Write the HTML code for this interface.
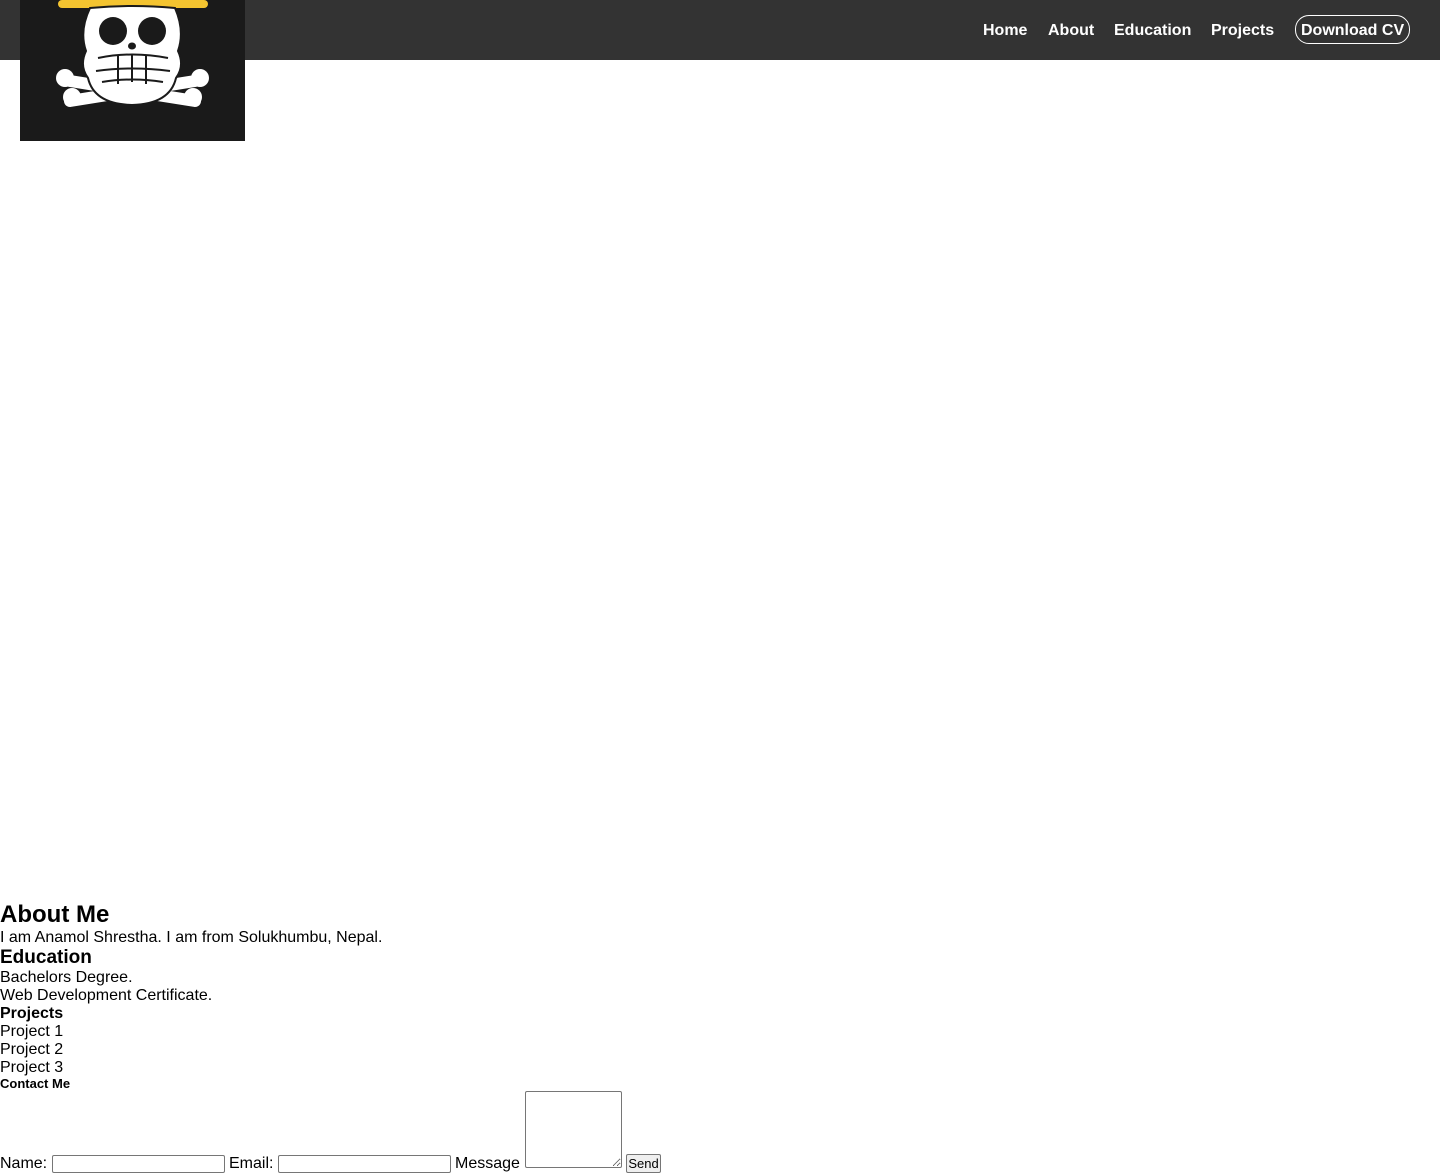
<!DOCTYPE html>
<html><head><meta charset="utf-8"><style>
*{box-sizing:border-box}
body{margin:0;width:1440px;height:1173px;position:relative;font-family:"Liberation Sans",sans-serif;background:#fff;color:#000;overflow:hidden}
.nav{position:absolute;left:0;top:0;width:1440px;height:60px;background:#333}
.nav a{position:absolute;top:21px;color:#fff;font-weight:bold;font-size:16px;text-decoration:none;line-height:20px}
.cv{border:1px solid #fff;border-radius:14px;padding:5px 5px 0;top:15px!important;height:29px}
.logo{position:absolute;left:20px;top:-84px;width:225px;height:225px;background:#1a1a1a}
.t{position:absolute;left:0;font-size:16px;line-height:18px;white-space:nowrap}
input,textarea,button{font-family:"Liberation Sans",sans-serif}
</style></head><body>
<div class="nav">
<a style="left:983px">Home</a>
<a style="left:1048px">About</a>
<a style="left:1114px">Education</a>
<a style="left:1211px">Projects</a>
<a class="cv" style="left:1295px">Download CV</a>
</div>
<div class="logo">
<svg width="225" height="225" viewBox="0 0 225 225">
<rect x="62" y="40" width="100" height="45" fill="#e01818"/>
<rect x="38" y="84" width="150" height="8" rx="4" fill="#f4c430"/>
<g stroke="#fff" stroke-width="12" stroke-linecap="round">
<path d="M50 165 L175 185"/><path d="M175 165 L50 185"/>
</g>
<g fill="#fff">
<circle cx="45" cy="162" r="9"/><circle cx="52" cy="181" r="9"/>
<circle cx="180" cy="162" r="9"/><circle cx="173" cy="181" r="9"/>
</g>
<g stroke="#1a1a1a" stroke-width="2" fill="#fff">
<path d="M70 92 Q112 88 155 92 Q165 115 158 135 Q165 150 156 162 Q150 188 112 189 Q74 188 68 162 Q59 150 66 135 Q59 115 70 92Z"/>
</g>
<ellipse cx="93" cy="115" rx="14" ry="14" fill="#1a1a1a"/>
<ellipse cx="132" cy="115" rx="14" ry="14" fill="#1a1a1a"/>
<ellipse cx="112" cy="130" rx="4" ry="3.5" fill="#1a1a1a"/>
<g stroke="#1a1a1a" stroke-width="2" fill="none">
<path d="M78 142 Q112 135 148 142"/><path d="M76 155 Q112 150 150 155"/><path d="M82 166 Q112 161 143 166"/>
<path d="M98 140 V168 M112 138 V166 M126 140 V168"/>
</g>
</svg>
</div>
<div class="t" style="top:901px;font-size:24px;font-weight:bold;line-height:28px">About Me</div>
<div class="t" style="top:929px">I am Anamol Shrestha. I am from Solukhumbu, Nepal.</div>
<div class="t" style="top:947px;font-size:19px;font-weight:bold;line-height:22px">Education</div>
<div class="t" style="top:969px">Bachelors Degree.</div>
<div class="t" style="top:987px">Web Development Certificate.</div>
<div class="t" style="top:1005px;font-weight:bold">Projects</div>
<div class="t" style="top:1023px">Project 1</div>
<div class="t" style="top:1041px">Project 2</div>
<div class="t" style="top:1059px">Project 3</div>
<div class="t" style="top:1076px;font-size:13px;font-weight:bold;line-height:15px">Contact Me</div>
<div class="t" style="top:1155px">Name:</div>
<input style="position:absolute;left:52px;top:1155px;width:173px;height:18px;border:1px solid #767676;border-radius:2px">
<div class="t" style="top:1155px;left:229px">Email:</div>
<input style="position:absolute;left:278px;top:1155px;width:173px;height:18px;border:1px solid #767676;border-radius:2px">
<div class="t" style="top:1155px;left:455px">Message</div>
<textarea style="position:absolute;left:525px;top:1091px;width:97px;height:77px;border:1px solid #767676;border-radius:2px;resize:both"></textarea>
<button style="position:absolute;left:626px;top:1154px;width:35px;height:19px;font-size:13px;padding:0;border:1px solid #767676;border-radius:2px;background:#efefef">Send</button>
</body></html>
